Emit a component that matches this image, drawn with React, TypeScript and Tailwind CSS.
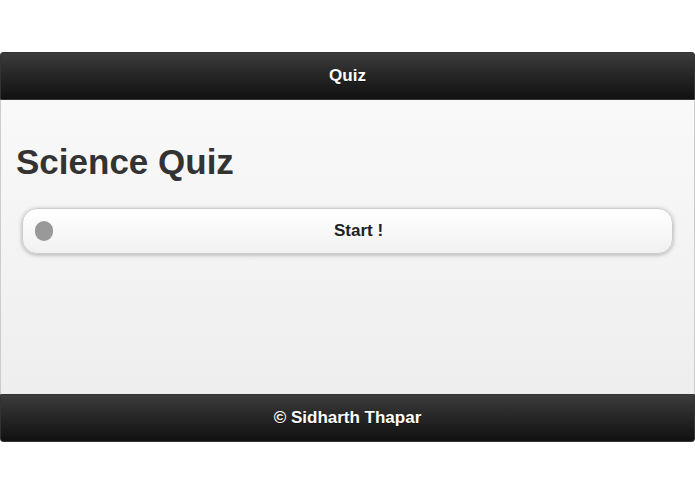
export default function App() {
  return (
    <div className="min-h-screen bg-white pt-[52px] font-['Liberation_Sans',Arial,sans-serif]">
      <div className="flex h-[390px] w-[695px] flex-col">
        {/* Header */}
        <div className="flex h-[48px] items-center justify-center rounded-t-[3px] border border-[#333] bg-gradient-to-b from-[#3c3c3c] to-[#111] text-[17px] font-bold text-white [text-shadow:0_1px_0_#111]">
          Quiz
        </div>

        {/* Content */}
        <div className="flex flex-1 flex-col border-x border-[#ccc] bg-gradient-to-b from-[#f9f9f9] to-[#eee] px-[15px]">
          <h1 className="mt-[44px] text-[35px] font-bold leading-none text-[#333]">Science Quiz</h1>
          <button className="relative mx-[6px] mt-[29px] flex h-[46px] items-center justify-center rounded-[15px] border border-[#ccc] bg-gradient-to-b from-white to-[#f1f1f1] pl-[22px] text-[17px] font-bold text-[#222] shadow-[0_1px_4px_rgba(0,0,0,0.3)]">
            <span className="absolute left-[12px] top-[12px] h-[20px] w-[18px] rounded-full bg-[#999]" />
            Start !
          </button>
        </div>

        {/* Footer */}
        <div className="flex h-[48px] items-center justify-center rounded-b-[3px] border border-[#333] bg-gradient-to-b from-[#3c3c3c] to-[#111] text-[17px] font-bold text-white [text-shadow:0_1px_0_#111]">
          © Sidharth Thapar
        </div>
      </div>
    </div>
  )
}
